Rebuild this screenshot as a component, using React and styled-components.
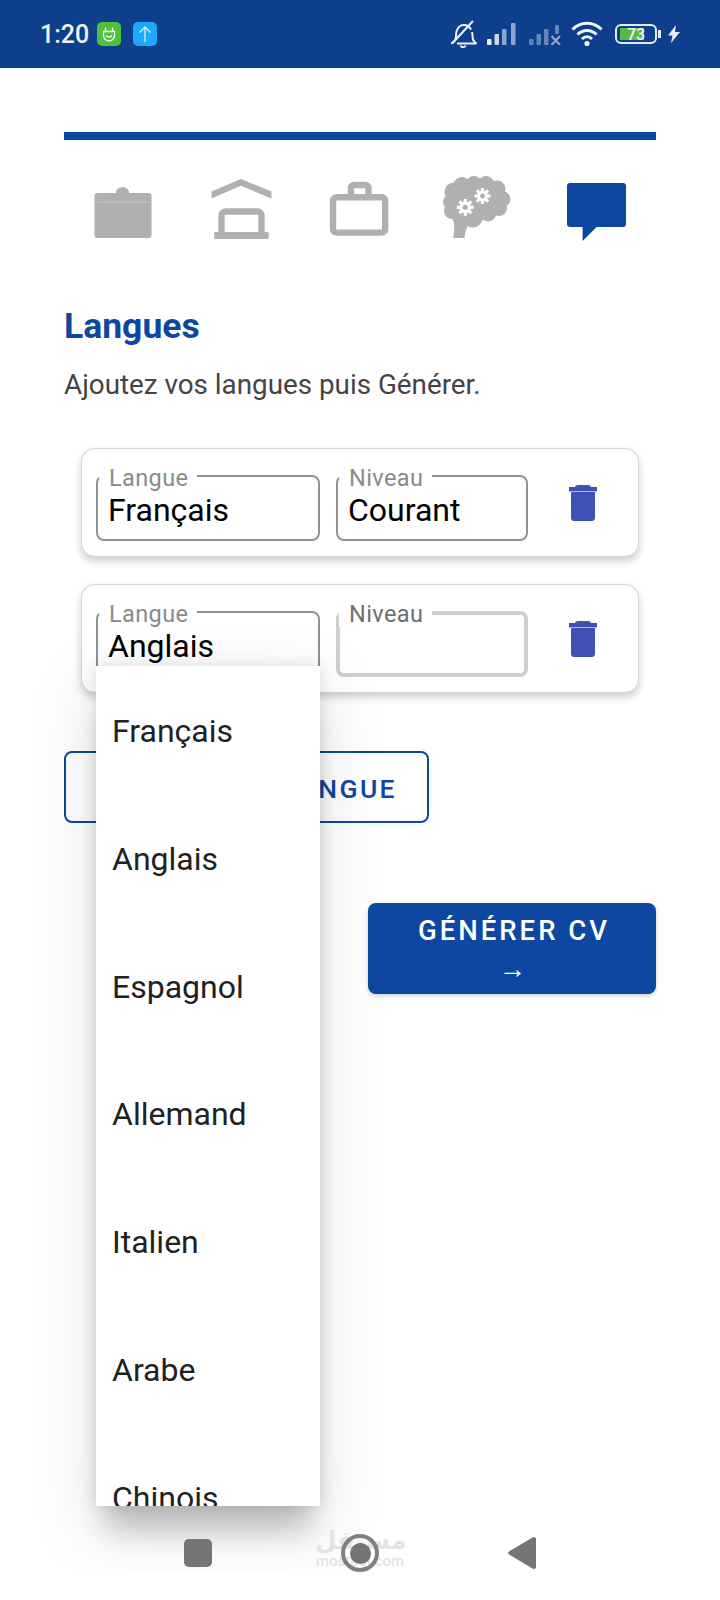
import React from "react";
import styled, { createGlobalStyle } from "styled-components";

const LANGUAGES = ["Français", "Anglais", "Espagnol", "Allemand", "Italien", "Arabe", "Chinois"];

const Gear = ({ cx, cy, r }) => (
  <g>
    {[0, 45, 90, 135, 180, 225, 270, 315].map((a) => (
      <rect
        key={a}
        x={cx - 1.6}
        y={cy - r - 2.6}
        width="3.2"
        height="4"
        fill="#fff"
        transform={`rotate(${a} ${cx} ${cy})`}
      />
    ))}
    <circle cx={cx} cy={cy} r={r} fill="#fff" />
    <circle cx={cx} cy={cy} r={r * 0.45} fill="#b0b0b0" />
  </g>
);

const NotesIcon = () => (
  <svg width="72" height="66" viewBox="0 0 72 66">
    <circle cx="35.5" cy="18" r="7" fill="#b0b0b0" />
    <rect x="7.5" y="17" width="57" height="45" rx="3" fill="#b0b0b0" />
    <rect x="10" y="25.5" width="52" height="1" fill="#c8c8c8" />
  </svg>
);

const SchoolIcon = () => (
  <svg width="72" height="66" viewBox="0 0 72 66" fill="#b0b0b0">
    <polygon points="5.5,15.5 34.8,3 65.5,15.5 65.5,22.5 34.8,9.7 5.5,22.5" />
    <path d="M15.5 57V39.5a4 4 0 0 1 4-4h32a4 4 0 0 1 4 4V57" fill="none" stroke="#b0b0b0" strokeWidth="6.4" />
    <rect x="8.2" y="56" width="54.4" height="7" />
  </svg>
);

const CaseIcon = () => (
  <svg width="72" height="66" viewBox="0 0 72 66" fill="none" stroke="#b0b0b0" strokeWidth="6.4">
    <rect x="9" y="21.2" width="52.2" height="35.4" rx="3.5" />
    <path d="M27 21V12a3 3 0 0 1 3-3h11.5a3 3 0 0 1 3 3v9" />
  </svg>
);

const BrainIcon = () => (
  <svg width="72" height="66" viewBox="0 0 72 66" fill="#b0b0b0">
    <circle cx="12" cy="16" r="9.5" />
    <circle cx="8.500" cy="26" r="7.500" />
    <circle cx="10" cy="35" r="8" />
    <circle cx="17" cy="41" r="7" />
    <circle cx="20" cy="10" r="9" />
    <circle cx="32" cy="8" r="8" />
    <circle cx="44" cy="8.500" r="8.500" />
    <circle cx="55" cy="13" r="8.500" />
    <circle cx="61" cy="23" r="7.500" />
    <circle cx="57" cy="32" r="8" />
    <circle cx="46" cy="37" r="8.500" />
    <circle cx="31" cy="42" r="9.500" />
    <circle cx="34" cy="25" r="20" />
    <path d="M11 62c1.500-6 1.500-12 .5-20h24c-8 3-12 9-13 20z" />
    <Gear cx={23.3} cy={31.3} r={5.8} />
    <Gear cx={40.5} cy={20} r={5.4} />
  </svg>
);

const BubbleIcon = () => (
  <svg width="72" height="66" viewBox="0 0 72 66">
    <path
      d="M9 7h53a3 3 0 0 1 3 3v38a3 3 0 0 1-3 3H35.700L21.600 65V51H9a3 3 0 0 1-3-3V10a3 3 0 0 1 3-3z"
      fill="#0d47a1"
    />
  </svg>
);

const TrashIcon = () => (
  <svg width="28" height="36" viewBox="0 0 28 36" fill="#3f51b5">
    <path d="M6 2.500C6 1 7 0 9 0h10c2 0 3 1 3 2.500V4H6z" />
    <rect x="0" y="2" width="28" height="4.400" />
    <path d="M2 7h24v26c0 1.700-1.300 3-3 3H5c-1.700 0-3-1.300-3-3z" />
  </svg>
);

const RobotBadge = () => (
  <svg width="18" height="18" viewBox="0 0 18 18" fill="none" stroke="#fff" strokeWidth="1.300">
    <path d="M3.500 6.500h11v4a5.500 5.500 0 0 1-11 0z" />
    <path d="M5.500 6V2.500M12.500 6V2.500M6 10.500c1.500 2 4.500 2 6 0" />
  </svg>
);

const UploadBadge = () => (
  <svg width="18" height="20" viewBox="0 0 18 20" fill="none" stroke="#e8f6ff" strokeWidth="1.200">
    <path d="M9 18V3M3.500 8.500 9 3l5.500 5.500" />
  </svg>
);

const MutedBell = () => (
  <svg width="28" height="29" viewBox="0 0 28 29" fill="none" stroke="#eef1f6" strokeWidth="2">
    <path d="M2 23.500c3-1 5-3 5-7.500 0-2 0-4 1-6 1.500-3.500 4-5 7-5 3 0 5.500 1.500 7 4.500M23 12c.5 1.500.5 2.500.5 4 0 4 2 6.500 4 7.500H8" />
    <path d="M11.500 25.500c.8 2.300 4.200 2.300 5 0" />
    <path d="M24 1 3.500 23" />
  </svg>
);

const SignalIcon = ({ muted }) => (
  <svg width="32" height="22" viewBox="0 0 32 22" fill={muted ? "#6485b8" : "#8ea6cc"}>
    <rect x="0" y="16" width="4.500" height="6" rx="1" fill={muted ? "#6485b8" : "#f2f2f2"} />
    <rect x="7.500" y="11" width="4.500" height="11" rx="1" fill={muted ? "#6485b8" : "#c9d4e6"} />
    <rect x="15" y="6" width="4.500" height="16" rx="1" />
    {muted ? (
      <g>
        <rect x="26" y="2" width="4" height="9" rx="1" />
        <path d="M22.500 13 31 22M31 13l-8.500 9" stroke="#8ea6cc" strokeWidth="2.200" fill="none" />
      </g>
    ) : (
      <rect x="24" y="0" width="4.500" height="22" rx="1" />
    )}
  </svg>
);

const WifiIcon = () => (
  <svg width="32" height="26" viewBox="0 0 32 26" fill="none" stroke="#f4f4f4" strokeWidth="3">
    <path d="M1.500 8.500c8-8.500 21-8.500 29 0" />
    <path d="M6.500 13.500c5.500-5.500 13.500-5.500 19 0" />
    <path d="M11 18c3-3 7-3 10 0" />
    <circle cx="16" cy="22.500" r="2.600" fill="#f4f4f4" stroke="none" />
  </svg>
);

const BoltIcon = () => (
  <svg width="12" height="18" viewBox="0 0 12 18" fill="#e8edf5">
    <path d="M8 0 0 10.500h4.500L3 18l9-11H7z" />
  </svg>
);

const App = () => {
  return (
    <Screen>
      <GlobalStyle />
      <StatusBar>
        <Clock>1:20</Clock>
        <AppBadge $bg="#4fc13c">
          <RobotBadge />
        </AppBadge>
        <AppBadge $bg="#1ea8fc" $gap>
          <UploadBadge />
        </AppBadge>
        <StatusRight>
          <MutedBell />
          <SignalIcon />
          <SignalIcon muted />
          <WifiIcon />
          <Battery>
            <BatteryFill />
            <BatteryText>73</BatteryText>
          </Battery>
          <BatteryNub />
          <BoltIcon />
        </StatusRight>
      </StatusBar>

      <Main>
        <Progress />
        <Steps>
          <Step><NotesIcon /></Step>
          <Step><SchoolIcon /></Step>
          <Step><CaseIcon /></Step>
          <Step><BrainIcon /></Step>
          <Step><BubbleIcon /></Step>
        </Steps>

        <Title>Langues</Title>
        <Subtitle>Ajoutez vos langues puis Générer.</Subtitle>

        <Card>
          <Field $w={224}>
            <FieldLabel>Langue</FieldLabel>
            <FieldValue>Français</FieldValue>
          </Field>
          <Field $w={192}>
            <FieldLabel>Niveau</FieldLabel>
            <FieldValue>Courant</FieldValue>
          </Field>
          <TrashButton><TrashIcon /></TrashButton>
        </Card>

        <Card $second>
          <Field $w={224}>
            <FieldLabel>Langue</FieldLabel>
            <FieldValue>Anglais</FieldValue>
            <Dropdown>
              {LANGUAGES.map((name) => (
                <Option key={name}>{name}</Option>
              ))}
            </Dropdown>
          </Field>
          <Field $w={192} $focused>
            <FieldLabel $focused>Niveau</FieldLabel>
            <FieldValue />
          </Field>
          <TrashButton><TrashIcon /></TrashButton>
        </Card>

        <AddButton>+ AJOUTER LANGUE</AddButton>
        <Footer>
          <GenerateButton>GÉNÉRER CV →</GenerateButton>
        </Footer>
      </Main>

      <NavBar>
        <NavSquare />
        <NavHome>
          <Watermark>
            <WatermarkArabic>مستقل</WatermarkArabic>
            <WatermarkLatin>mostaql.com</WatermarkLatin>
          </Watermark>
          <NavRing />
        </NavHome>
        <svg width="28" height="32" viewBox="0 0 28 32">
          <path d="M26 0c1 0 2 .8 2 2v28c0 1.200-1 2-2 2-.5 0-1-.2-1.500-.6L1 17.500c-1.300-.8-1.300-2.200 0-3L24.500.6C25 .2 25.500 0 26 0z" fill="#757575" />
        </svg>
      </NavBar>
    </Screen>
  );
};

// Styled Components
const GlobalStyle = createGlobalStyle`
  html, body {
    margin: 0;
    padding: 0;
    background: #fff;
    font-family: Roboto, "Liberation Sans", sans-serif;
  }
`;

const Screen = styled.div`
  position: relative;
  width: 720px;
  height: 1600px;
  overflow: hidden;
  background: #fff;
`;

const StatusBar = styled.div`
  height: 68px;
  display: flex;
  align-items: center;
  padding: 0 40px;
  background: #0e3f8c;
`;

const Clock = styled.span`
  width: 57px;
  font-size: 25px;
  font-weight: 500;
  color: #f2f2f2;
`;

const AppBadge = styled.div`
  width: 24px;
  height: 24px;
  margin-left: ${(p) => (p.$gap ? "12px" : "0")};
  display: flex;
  align-items: center;
  justify-content: center;
  border-radius: 5px;
  background: ${(p) => p.$bg};
`;

const StatusRight = styled.div`
  margin-left: auto;
  display: flex;
  align-items: center;
  gap: 10px;
`;

const Battery = styled.div`
  position: relative;
  width: 42px;
  height: 20px;
  box-sizing: border-box;
  margin-left: 2px;
  display: flex;
  align-items: center;
  justify-content: center;
  border: 2px solid #e4e9f2;
  border-radius: 6px;
`;

const BatteryFill = styled.div`
  position: absolute;
  left: 3px;
  top: 2px;
  bottom: 2px;
  width: 24px;
  background: #58b948;
`;

const BatteryText = styled.span`
  position: relative;
  font-size: 16px;
  font-weight: 500;
  color: #f4f4f4;
`;

const BatteryNub = styled.div`
  width: 3px;
  height: 8px;
  margin: 0 -3px 0 -9px;
  background: #e4e9f2;
`;

const Main = styled.main`
  position: relative;
  height: 1502px;
  box-sizing: border-box;
  overflow: hidden;
  padding: 64px 64px 0;
`;

const Progress = styled.div`
  height: 8px;
  background: #0d47a1;
`;

const Steps = styled.div`
  margin-top: 36px;
  display: grid;
  grid-template-columns: repeat(5, 1fr);
`;

const Step = styled.div`
  height: 66px;
  display: flex;
  justify-content: center;
`;

const Title = styled.h1`
  margin: 64px 0 0;
  font-size: 35.500px;
  line-height: 40px;
  font-weight: 700;
  color: #0d47a1;
`;

const Subtitle = styled.p`
  margin: 21px 0 0;
  font-size: 27.800px;
  line-height: 36px;
  color: #444;
`;

const Card = styled.div`
  margin: ${(p) => (p.$second ? "27px" : "45px")} 17px 0;
  height: 109px;
  box-sizing: border-box;
  padding: 26px 14px 0;
  display: flex;
  gap: 16px;
  background: #fff;
  border: 1px solid #d6d6d6;
  border-radius: 14px;
  box-shadow: 0 4px 9px rgba(0, 0, 0, 0.2);
`;

const Field = styled.div`
  position: relative;
  width: ${(p) => p.$w}px;
  height: 66px;
  box-sizing: border-box;
  padding: ${(p) => (p.$focused ? "12px 9px 0" : "14px 10px 0")};
  border: ${(p) => (p.$focused ? "4px solid #cfcfcf" : "2px solid #919191")};
  border-radius: 8px;
`;

const FieldLabel = styled.span`
  position: absolute;
  left: ${(p) => (p.$focused ? "-1px" : "1px")};
  top: ${(p) => (p.$focused ? "-14px" : "-12px")};
  padding: 0 9px 0 10px;
  background: #fff;
  font-size: 23.500px;
  line-height: 26px;
  letter-spacing: 0.4px;
  color: ${(p) => (p.$focused ? "#6f6f6f" : "#8a8a8a")};
`;

const FieldValue = styled.div`
  height: 38px;
  font-size: 32px;
  line-height: 38px;
  color: #000;
`;

const TrashButton = styled.div`
  margin: 10px 0 0 25px;
`;

const Dropdown = styled.ul`
  position: absolute;
  z-index: 5;
  left: -2px;
  top: 53px;
  width: 224px;
  height: 840px;
  margin: 0;
  padding: 0;
  overflow: hidden;
  list-style: none;
  background: #fff;
  box-shadow: 0 34px 26px -10px rgba(0, 0, 0, 0.2), 0 20px 60px 10px rgba(0, 0, 0, 0.09),
    0 0 14px rgba(0, 0, 0, 0.1);
`;

const Option = styled.li`
  height: 127.800px;
  padding-left: 16px;
  font-size: 32px;
  line-height: 130px;
  color: #212121;
`;

const AddButton = styled.div`
  margin-top: 58px;
  width: 365px;
  height: 72px;
  box-sizing: border-box;
  padding: 3px 30px 0 0;
  display: flex;
  align-items: center;
  justify-content: flex-end;
  border: 2px solid #0d47a1;
  border-radius: 8px;
  font-size: 26.500px;
  font-weight: 500;
  letter-spacing: 2.400px;
  color: #0d47a1;
`;

const Footer = styled.div`
  margin-top: 80px;
  display: flex;
  justify-content: flex-end;
`;

const GenerateButton = styled.div`
  width: 288px;
  height: 91px;
  box-sizing: border-box;
  padding: 9px 40px 0 44px;
  text-align: center;
  border-radius: 8px;
  background: #0d47a1;
  box-shadow: 0 2px 4px rgba(0, 0, 0, 0.2);
  font-size: 27.500px;
  line-height: 38px;
  font-weight: 500;
  letter-spacing: 3px;
  color: #fff;
`;

const NavBar = styled.nav`
  position: absolute;
  z-index: 6;
  left: 184px;
  top: 1537px;
  width: 352px;
  height: 32px;
  display: flex;
  align-items: center;
  justify-content: space-between;
`;

const NavSquare = styled.div`
  width: 28px;
  height: 28px;
  border-radius: 5px;
  background: #757575;
`;

const NavHome = styled.div`
  position: relative;
  display: flex;
  align-items: center;
  justify-content: center;
`;

const NavRing = styled.div`
  position: relative;
  width: 38px;
  height: 38px;
  box-sizing: border-box;
  border: 4px solid #808080;
  border-radius: 50%;
  background: #757575;
  background-clip: content-box;
  padding: 4.500px;
`;

const Watermark = styled.div`
  position: absolute;
  left: 50%;
  top: 50%;
  transform: translate(-50%, calc(-50% - 5px));
  width: 90px;
  text-align: center;
  color: #e3e3e3;
`;

const WatermarkArabic = styled.div`
  font-family: "DejaVu Sans", sans-serif;
  font-size: 25px;
  font-weight: 700;
  line-height: 26px;
`;

const WatermarkLatin = styled.div`
  font-size: 15px;
  font-weight: 500;
  line-height: 15px;
`;

export default App;
